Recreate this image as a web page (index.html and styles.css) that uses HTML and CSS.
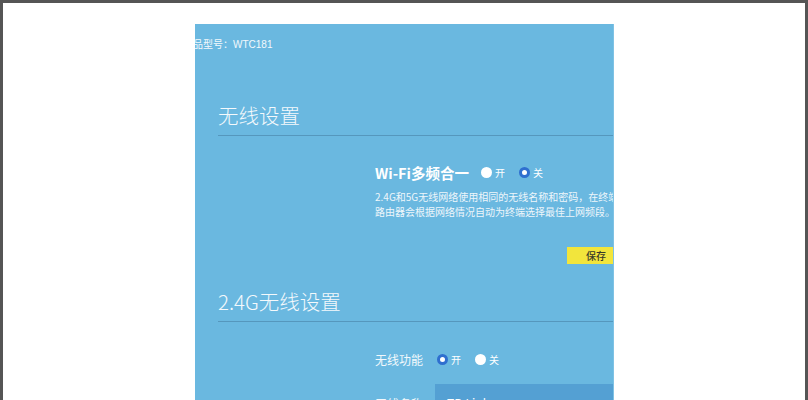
FILE: index.html
```html
<!DOCTYPE html>
<html lang="zh-CN">
<head>
<meta charset="utf-8">
<link rel="stylesheet" href="styles.css">
</head>
<body>
<div class="frame">
  <div class="panel">
    <div class="model">产品型号：WTC181</div>
    <div class="section-title">无线设置</div>
    <div class="block">
      <div class="wifi-row">
        <span class="wifi-title">Wi-Fi多频合一</span>
        <span class="radio"></span><span class="opt">开</span>
        <span class="radio on"></span><span class="opt">关</span>
      </div>
      <p class="desc">2.4G和5G无线网络使用相同的无线名称和密码，在终端连接时，<br>路由器会根据网络情况自动为终端选择最佳上网频段。</p>
    </div>
    <div class="btn-row"><span class="btn">保存</span></div>
    <div class="section-title second">2.4G无线设置</div>
    <div class="form-row first">
      <span class="label">无线功能</span>
      <span class="radio on"></span><span class="opt">开</span>
      <span class="radio"></span><span class="opt">关</span>
    </div>
    <div class="form-row name">
      <span class="label">无线名称</span>
      <span class="input">TP-Link</span>
    </div>
  </div>
</div>
</body>
</html>
```
FILE: styles.css
```css
html, body {
  margin: 0;
  padding: 0;
  background: #ffffff;
}
body {
  width: 808px;
  height: 400px;
  overflow: hidden;
  font-family: "Noto Sans CJK SC", "Noto Sans", sans-serif;
}
.frame {
  box-sizing: border-box;
  width: 808px;
  height: 400px;
  border: 3px solid #555555;
  border-bottom: none;
  background: #ffffff;
  padding-top: 21px;
  padding-left: 192px;
}
.panel {
  width: 418px;
  height: 376px;
  background: #6ab8e0;
  overflow: hidden;
  color: #ffffff;
  border-right: 1px solid #7fc2e4;
}
.model {
  font-family: "Liberation Sans", "Noto Sans CJK SC", sans-serif;
  font-size: 10px;
  line-height: 42px;
  white-space: nowrap;
  margin-left: -12px;
  color: #f2f8fc;
}
.section-title {
  margin-left: 23px;
  margin-top: 35px;
  font-size: 20.5px;
  font-weight: 300;
  line-height: 28px;
  padding-bottom: 6px;
  border-bottom: 1px solid #5597bd;
  color: #f4f9fc;
}
.section-title.second {
  margin-top: 23px;
}
.block {
  margin-left: 180px;
  margin-top: 26px;
}
.wifi-row {
  display: flex;
  align-items: center;
  height: 20px;
}
.wifi-title {
  font-size: 14.5px;
  font-weight: 700;
  margin-right: 12px;
  white-space: nowrap;
}
.radio {
  box-sizing: border-box;
  width: 11px;
  height: 11px;
  border-radius: 50%;
  background: #ffffff;
  flex: none;
}
.radio.on {
  background: #ffffff;
  border: 3.5px solid #2f6fcf;
}
.opt {
  font-size: 10px;
  margin-left: 3px;
  margin-right: 14px;
}
.desc {
  margin: 7px 0 0;
  font-size: 10px;
  line-height: 15px;
  white-space: nowrap;
  color: #eef6fb;
}
.btn-row {
  margin-top: 28px;
  margin-left: 372px;
  height: 17px;
}
.btn {
  display: block;
  width: 60px;
  height: 17px;
  background: #f2e53c;
  color: #3a3a2a;
  font-size: 10px;
  line-height: 17px;
  padding-left: 19px;
  font-weight: 500;
}
.form-row {
  display: flex;
  align-items: center;
  height: 20px;
}
.form-row.first {
  margin-top: 27px;
}
.label {
  width: 230px;
  text-align: right;
  font-size: 12px;
  padding-right: 12px;
  box-sizing: border-box;
  flex: none;
  color: #f2f8fc;
}
.form-row.first .label {
  width: 242px;
  padding-right: 14px;
}
.form-row.name {
  margin-top: 15px;
  height: 30px;
  align-items: flex-start;
}
.form-row.name .label {
  width: 240px;
  padding-right: 12px;
  line-height: 30px;
  padding-top: 5px;
}
.input {
  flex: 1;
  height: 30px;
  background: #54a0d3;
  font-size: 12px;
  line-height: 30px;
  padding-left: 12px;
  padding-top: 4px;
}
```
